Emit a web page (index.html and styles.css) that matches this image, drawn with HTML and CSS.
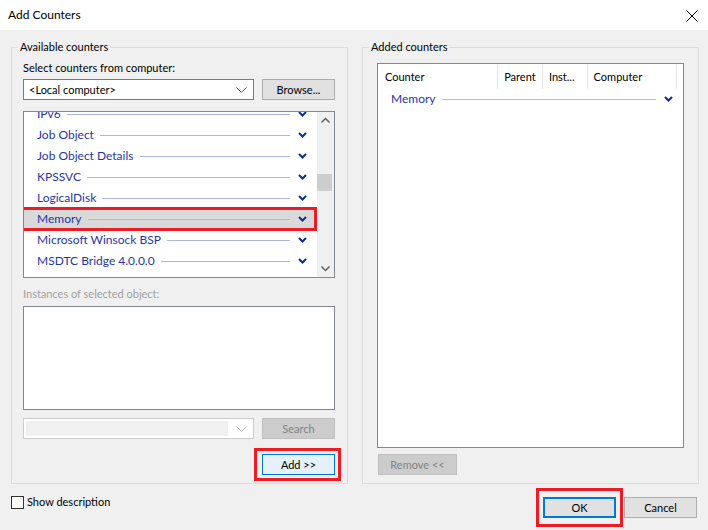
FILE: index.html
```html
<!DOCTYPE html>
<html>
<head>
<meta charset="utf-8">
<title>Add Counters</title>
<link rel="stylesheet" href="styles.css">
</head>
<body>
<div class="window">
  <div class="titlebar">
    <span class="title">Add Counters</span>
    <svg class="close" width="12" height="12" viewBox="0 0 12 12"><path d="M0.5 0.5 L11.5 11.5 M11.5 0.5 L0.5 11.5" stroke="#000" stroke-width="1" fill="none"/></svg>
  </div>
  <div class="content">
    <div class="groups">
      <fieldset class="group group-left">
        <legend>Available counters</legend>
        <div class="label first">Select counters from computer:</div>
        <div class="row">
          <div class="combo">
            <span class="combo-text">&lt;Local computer&gt;</span>
            <svg class="combo-arrow" width="11" height="6" viewBox="0 0 11 6"><path d="M0.5 0.5 L5.5 5.5 L10.5 0.5" stroke="#5a5a5a" stroke-width="1" fill="none"/></svg>
          </div>
          <button class="btn">Browse...</button>
        </div>
        <div class="listbox">
          <div class="items-viewport">
            <div class="items">
              <div class="item"><span class="name">IPv6</span><span class="rule"></span><svg class="chev" width="9" height="6" viewBox="0 0 9 6"><path d="M1 1 L4.5 4.5 L8 1" stroke="#0a2f93" stroke-width="2" fill="none"/></svg></div>
              <div class="item"><span class="name">Job Object</span><span class="rule"></span><svg class="chev" width="9" height="6" viewBox="0 0 9 6"><path d="M1 1 L4.5 4.5 L8 1" stroke="#0a2f93" stroke-width="2" fill="none"/></svg></div>
              <div class="item"><span class="name">Job Object Details</span><span class="rule"></span><svg class="chev" width="9" height="6" viewBox="0 0 9 6"><path d="M1 1 L4.5 4.5 L8 1" stroke="#0a2f93" stroke-width="2" fill="none"/></svg></div>
              <div class="item"><span class="name">KPSSVC</span><span class="rule"></span><svg class="chev" width="9" height="6" viewBox="0 0 9 6"><path d="M1 1 L4.5 4.5 L8 1" stroke="#0a2f93" stroke-width="2" fill="none"/></svg></div>
              <div class="item"><span class="name">LogicalDisk</span><span class="rule"></span><svg class="chev" width="9" height="6" viewBox="0 0 9 6"><path d="M1 1 L4.5 4.5 L8 1" stroke="#0a2f93" stroke-width="2" fill="none"/></svg></div>
              <div class="item selected"><span class="name">Memory</span><span class="rule"></span><svg class="chev" width="9" height="6" viewBox="0 0 9 6"><path d="M1 1 L4.5 4.5 L8 1" stroke="#0a2f93" stroke-width="2" fill="none"/></svg></div>
              <div class="item"><span class="name">Microsoft Winsock BSP</span><span class="rule"></span><svg class="chev" width="9" height="6" viewBox="0 0 9 6"><path d="M1 1 L4.5 4.5 L8 1" stroke="#0a2f93" stroke-width="2" fill="none"/></svg></div>
              <div class="item"><span class="name">MSDTC Bridge 4.0.0.0</span><span class="rule"></span><svg class="chev" width="9" height="6" viewBox="0 0 9 6"><path d="M1 1 L4.5 4.5 L8 1" stroke="#0a2f93" stroke-width="2" fill="none"/></svg></div>
            </div>
          </div>
          <div class="scrollbar">
            <svg class="sb-arrow" width="17" height="17" viewBox="0 0 17 17"><path d="M4.5 10.5 L8.5 6.5 L12.5 10.5" stroke="#606060" stroke-width="1.5" fill="none"/></svg>
            <div class="sb-track"><div class="sb-thumb"></div></div>
            <svg class="sb-arrow" width="17" height="17" viewBox="0 0 17 17"><path d="M4.5 6.5 L8.5 10.5 L12.5 6.5" stroke="#606060" stroke-width="1.5" fill="none"/></svg>
          </div>
        </div>
        <div class="label disabled-label">Instances of selected object:</div>
        <div class="instances"></div>
        <div class="row row-search">
          <div class="combo combo-disabled">
            <span class="combo-fill"></span>
            <svg class="combo-arrow" width="11" height="6" viewBox="0 0 11 6"><path d="M0.5 0.5 L5.5 5.5 L10.5 0.5" stroke="#b5b5b5" stroke-width="1" fill="none"/></svg>
          </div>
          <button class="btn btn-disabled">Search</button>
        </div>
        <div class="row row-add">
          <button class="btn btn-add marked marked-add">Add &gt;&gt;</button>
        </div>
      </fieldset>

      <fieldset class="group group-right">
        <legend>Added counters</legend>
        <div class="listview">
          <div class="lv-header">
            <div class="col col-counter">Counter</div>
            <div class="col col-parent">Parent</div>
            <div class="col col-inst">Inst...</div>
            <div class="col col-computer">Computer</div>
            <div class="col col-rest"></div>
          </div>
          <div class="lv-item"><span class="name">Memory</span><span class="rule"></span><svg class="chev" width="9" height="6" viewBox="0 0 9 6"><path d="M1 1 L4.5 4.5 L8 1" stroke="#0a2f93" stroke-width="2" fill="none"/></svg></div>
        </div>
        <div class="row">
          <button class="btn btn-disabled btn-remove">Remove &lt;&lt;</button>
        </div>
      </fieldset>
    </div>

    <div class="footer">
      <label class="check"><span class="box"></span><span>Show description</span></label>
      <div class="actions">
        <button class="btn btn-ok marked marked-ok">OK</button>
        <button class="btn">Cancel</button>
      </div>
    </div>
  </div>
</div>
</body>
</html>
```

FILE: styles.css
```css
* { box-sizing: border-box; }

html, body {
  margin: 0;
  padding: 0;
}

body {
  width: 708px;
  height: 530px;
  overflow: hidden;
  background: #f0f0f0;
  font-family: Lato, "Noto Sans", "Liberation Sans", sans-serif;
  font-size: 11px;
  line-height: 16px;
  color: #000;
}

.window {
  width: 708px;
  height: 530px;
  display: flex;
  flex-direction: column;
}

.titlebar {
  height: 30px;
  background: #fff;
  display: flex;
  align-items: center;
  justify-content: space-between;
  padding: 0 10px 0 8px;
  flex: none;
}

.title {
  font-size: 12px;
  color: #000;
}

.close { display: block; margin-top: 1px; }

.content {
  padding: 9px 0 0 11px;
  flex: 1;
}

.groups {
  display: flex;
  gap: 14px;
}

.group {
  margin: 0;
  width: 337px;
  height: 445px;
  border: 1px solid #dcdcdc;
  min-width: 0;
}

.group legend {
  padding: 0 2px;
  line-height: 16px;
  color: #000;
}

.group-left {
  padding: 0 12px 0 11px;
}

.group-left legend { margin-left: -5px; }

.group-right {
  padding: 0 14px 0 14px;
}

.group-right legend { margin-left: -8px; }

.label { line-height: 16px; }
.label.first { margin-top: 5px; }

.row {
  display: flex;
  justify-content: space-between;
  align-items: center;
  margin-top: 3px;
}

.combo {
  width: 231px;
  height: 21px;
  background: #fff;
  border: 1px solid #7a7a7a;
  display: flex;
  align-items: center;
  justify-content: space-between;
  padding: 0 6px 0 5px;
}

.combo-text { white-space: nowrap; }

.combo-arrow { display: block; }

.btn {
  font-family: inherit;
  font-size: 11px;
  line-height: 16px;
  height: 21px;
  width: 73px;
  padding: 0;
  margin: 0;
  background: #e1e1e1;
  border: 1px solid #adadad;
  color: #000;
  position: relative;
}

.listbox {
  margin-top: 11px;
  height: 167px;
  border: 1px solid #828790;
  background: #fff;
  display: flex;
}

.items-viewport {
  flex: 1;
  overflow: hidden;
  position: relative;
}

.items {
  margin-top: -9px;
}

.item {
  height: 21px;
  display: flex;
  align-items: center;
  padding: 0 10px 0 13px;
  color: #1f36a6;
  font-size: 12px;
  position: relative;
}

.item .name, .lv-item .name { white-space: nowrap; }

.item .rule, .lv-item .rule {
  flex: 1;
  height: 1px;
  background: #a9b9dd;
  margin: 1px 8px 0 6px;
}

.chev { display: block; flex: none; }

.item.selected {
  background: #d9d9d9;
  height: 20px;
  margin: 1px 0 0;
}

.item.selected .rule { background: #b4b8c6; }

.item.selected::after {
  content: "";
  position: absolute;
  left: -3px;
  right: 0;
  top: -2px;
  bottom: -2px;
  border: 3px solid #ed1c24;
}

.scrollbar {
  width: 17px;
  background: #f0f0f0;
  display: flex;
  flex-direction: column;
  flex: none;
}

.sb-arrow { display: block; flex: none; }

.sb-track {
  flex: 1;
  padding-top: 45px;
}

.sb-thumb {
  width: 15px;
  height: 17px;
  background: #cdcdcd;
}

.disabled-label {
  margin-top: 8px;
  color: #a0a0a0;
}

.instances {
  margin-top: 4px;
  height: 104px;
  background: #fff;
  border: 1px solid #828790;
}

.row-search { margin-top: 8px; }

.combo-disabled {
  border-color: #cccccc;
  padding: 2px 6px 2px 2px;
  align-items: stretch;
}

.combo-fill {
  flex: 1;
  background: #f0f0f0;
  margin-right: 8px;
}

.combo-disabled .combo-arrow { align-self: center; }

.btn-disabled {
  background: #cccccc;
  border-color: #bfbfbf;
  color: #838383;
}

.row-add {
  justify-content: flex-end;
  margin-top: 15px;
}

.btn-add {
  background: #e5f1fb;
  border-color: #0078d7;
}

.marked::after {
  content: "";
  position: absolute;
  border: 3px solid #ed1c24;
  pointer-events: none;
}

.marked-add::after {
  left: -9px;
  right: -7px;
  top: -7px;
  bottom: -7px;
}

.listview {
  margin-top: 8px;
  height: 385px;
  background: #fff;
  border: 1px solid #828790;
}

.lv-header {
  display: flex;
  height: 26px;
  padding-top: 1px;
}

.col {
  height: 24px;
  line-height: 24px;
  padding-left: 6px;
  border-right: 1px solid #e5e5e5;
  white-space: nowrap;
  overflow: hidden;
}

.col-counter { width: 121px; padding-left: 7px; }
.col-parent { width: 45px; }
.col-inst { width: 45px; }
.col-computer { width: 90px; }
.col-rest { flex: 1; border-right: none; }

.lv-item {
  height: 18px;
  display: flex;
  align-items: center;
  padding: 0 10px 0 13px;
  color: #1f36a6;
  font-size: 12px;
}

.btn-remove {
  width: 79px;
  margin-left: 1px;
}

.group-right .row { margin-top: 6px; }

.footer {
  display: flex;
  justify-content: space-between;
  align-items: flex-start;
  margin-top: 10px;
  padding-right: 11px;
}

.check {
  display: flex;
  align-items: center;
  gap: 3px;
}

.box {
  width: 13px;
  height: 13px;
  background: #fff;
  border: 1px solid #333;
}

.actions {
  display: flex;
  gap: 8px;
  margin-top: 3px;
}

.btn-ok {
  border: 2px solid #0078d7;
}

.marked-ok::after {
  left: -9px;
  right: -9px;
  top: -11px;
  bottom: -11px;
}
```
